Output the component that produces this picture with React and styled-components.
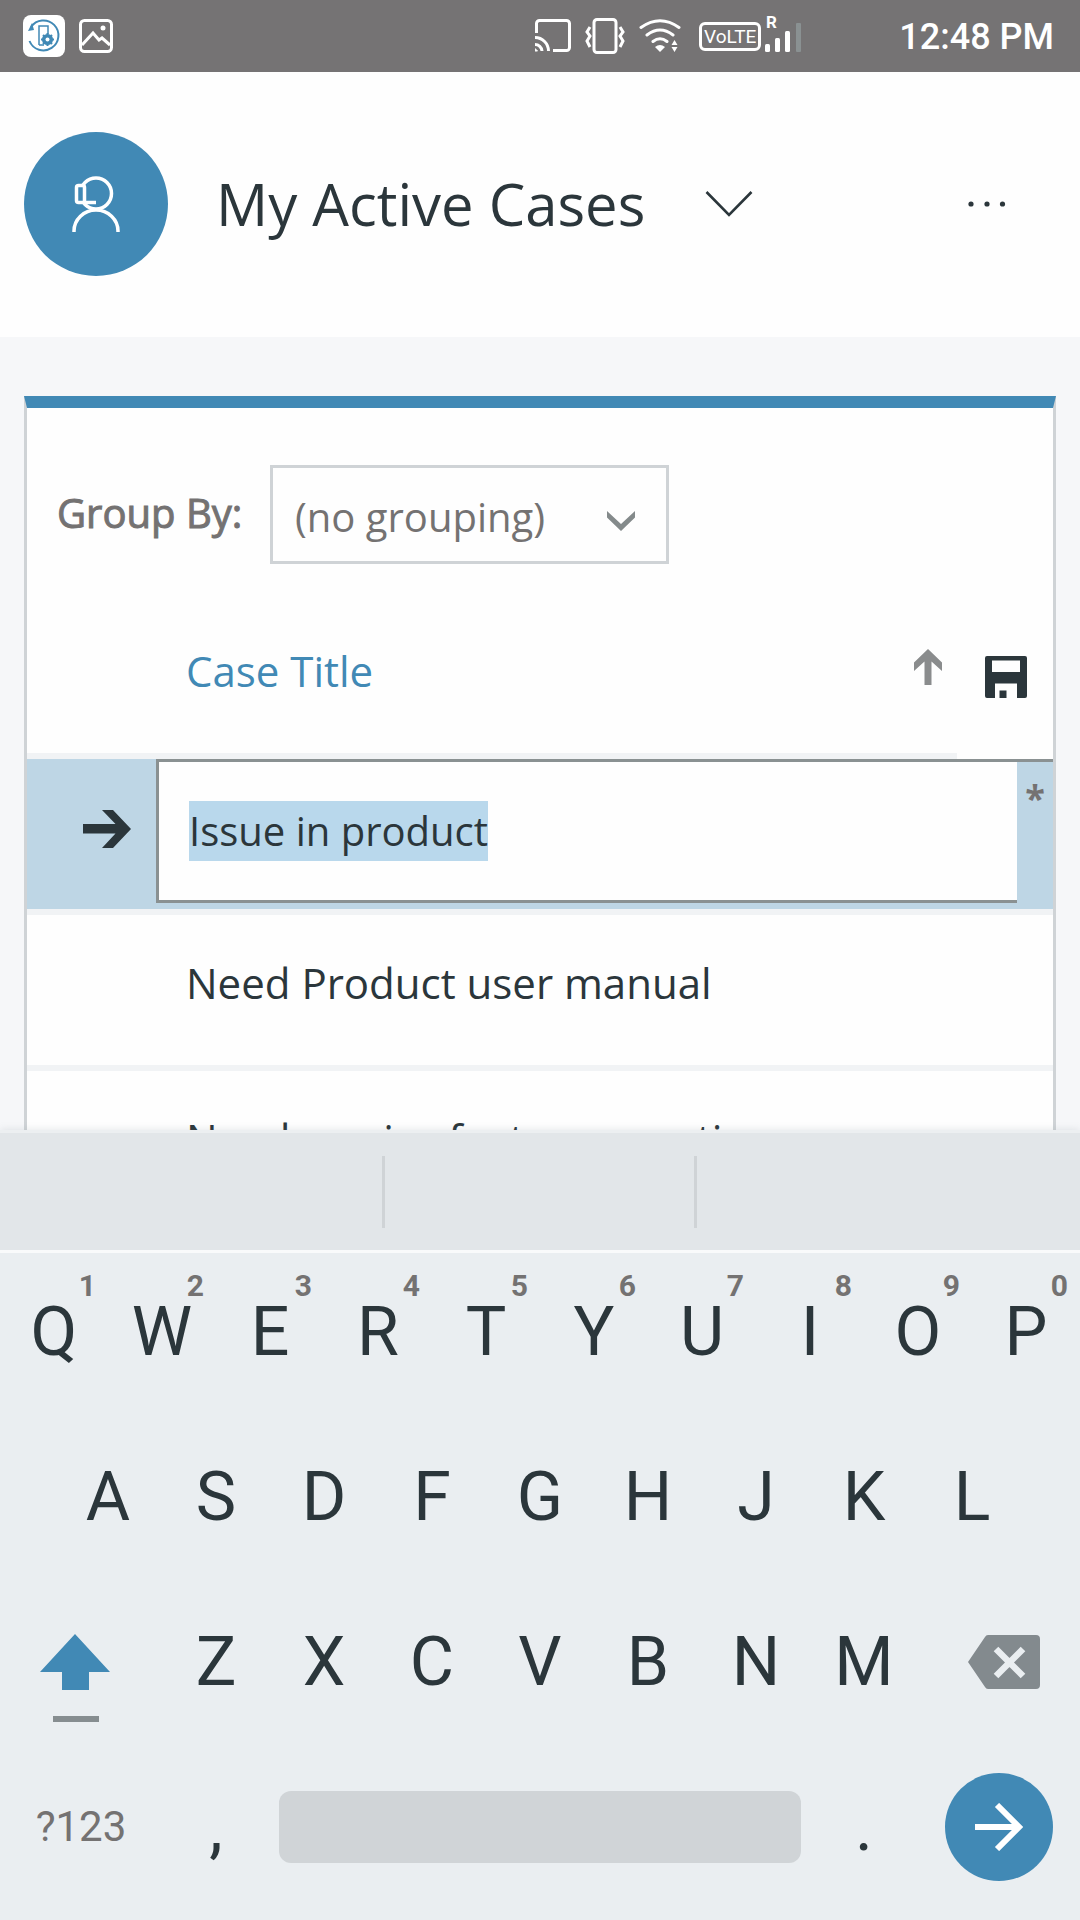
import React, { useEffect, useRef, useState } from "react";
import styled, { createGlobalStyle, css } from "styled-components";

const ink = "#2b363b";
const blue = "#4189b5";
const grey = "#747272";
const line = "#cfd3d6";

const GlobalStyle = createGlobalStyle`
  *, *::before, *::after { box-sizing: border-box; }
  body { margin: 0; background: #f6f7f9; }
  button, input, select { font: inherit; color: inherit; }
  button { background: none; border: 0; padding: 0; cursor: pointer; }
  svg { display: block; flex: none; }
`;

const Screen = styled.div`
  display: flex;
  flex-direction: column;
  height: 100vh;
  overflow: hidden;
  background: #f6f7f9;
  color: ${ink};
  font-family: "Open Sans", "Noto Sans", sans-serif;
  font-size: 42px;
  line-height: 60px;
`;

/* Status bar */

const StatusBar = styled.div`
  display: flex;
  flex: none;
  align-items: center;
  justify-content: space-between;
  height: 72px;
  padding: 0 26px 0 23px;
  background: #757374;
  color: #fff;
  font-family: Roboto, sans-serif;
`;

const StatusGroup = styled.div`
  display: flex;
  align-items: center;
  gap: 14px;
`;

const VolteBadge = styled.span`
  width: 62px;
  height: 29px;
  border: 3px solid #fff;
  border-radius: 6px;
  font-size: 19px;
  line-height: 24px;
  text-align: center;
`;

const NetworkGroup = styled.span`
  display: flex;
  align-items: center;
  gap: 4px;
  margin-left: 4px;
`;

const Clock = styled.time`
  margin-left: 84px;
  padding-top: 2px;
  font-size: 36px;
  font-weight: 500;
`;

/* View header */

const Header = styled.header`
  display: flex;
  flex: none;
  align-items: center;
  height: 265px;
  padding: 0 74px 2px 24px;
  background: #fefefe;
`;

const Avatar = styled.span`
  display: grid;
  place-items: center;
  width: 144px;
  height: 144px;
  border-radius: 50%;
  background: ${blue};
`;

const ViewTitle = styled.h1`
  margin: 0 60px 0 48px;
  font-size: 58px;
  font-weight: 400;
  line-height: 80px;
`;

const MoreButton = styled.button`
  margin-left: auto;
`;

/* Grid card */

const Content = styled.main`
  flex: 1;
  min-height: 0;
  overflow: hidden;
  padding: 59px 24px 0;
`;

const Card = styled.section`
  border: 3px solid ${line};
  border-top: 12px solid ${blue};
  background: #fefefe;
`;

const Toolbar = styled.div`
  display: flex;
  align-items: center;
  padding: 57px 30px 39px;
  color: ${grey};
  font-size: 40px;
`;

const GroupLabel = styled.label`
  width: 213px;
  padding-bottom: 4px;
  white-space: nowrap;
  -webkit-text-stroke: 1px ${grey};
`;

const SelectBox = styled.div`
  position: relative;
  width: 399px;

  svg {
    position: absolute;
    top: 46px;
    right: 34px;
    pointer-events: none;
  }
`;

const Select = styled.select`
  display: block;
  width: 100%;
  height: 99px;
  padding: 4px 80px 0 22px;
  border: 3px solid ${line};
  border-radius: 0;
  background: #fefefe;
  appearance: none;
`;

const CaseTable = styled.table`
  width: 100%;
  table-layout: fixed;
  border-collapse: separate;
  border-spacing: 0;
`;

const GutterCol = styled.col`
  width: 129px;
`;

const ActionCol = styled.col`
  width: 96px;
`;

const cell = css`
  height: 156px;
  padding: 38px 0 0;
  border-bottom: 6px solid #f1f3f5;
  font-weight: 400;
  text-align: left;
  vertical-align: top;
`;

const Cell = styled.td`
  ${cell}
  padding-left: ${(p) => (p.$text ? 30 : 0)}px;
`;

const HeadCell = styled.th`
  ${cell}
  padding-left: ${(p) => (p.$text ? 30 : 0)}px;
  border-bottom-color: ${(p) => (p.$plain ? "#fefefe" : "#f1f3f5")};
  color: ${blue};
`;

const SortButton = styled.button`
  display: flex;
  align-items: center;
  justify-content: space-between;
  width: 100%;
  padding-right: 15px;
`;

const SaveButton = styled.button`
  display: block;
  padding: 15px 0 0 28px;
`;

const MarkerCell = styled.td`
  ${cell}
  padding: 51px 0 0 56px;
  background: #bed6e5;
  background-clip: padding-box;
`;

const EditorCell = styled.td`
  ${cell}
  padding: 0 0 6px;
  background: #bed6e5;
  background-clip: padding-box;
`;

const Editor = styled.div`
  display: flex;
  height: 144px;
  border-top: 3px solid #8a9192;
  border-left: 3px solid #8a9192;
`;

const TitleInput = styled.input`
  flex: 1;
  min-width: 0;
  padding: 0 0 0 30px;
  border: 0;
  border-bottom: 3px solid #8a9192;
  border-radius: 0;
  outline: 0;
  background: #fefefe;
  font-size: 40px;

  &::selection {
    background: #b9d8ec;
    color: ${ink};
  }
`;

const Required = styled.span`
  width: 36px;
  padding-top: 6px;
  color: ${grey};
  font-weight: 700;
  font-size: 36px;
  text-align: center;
`;

/* Keyboard */

const Keyboard = styled.section`
  position: relative;
  flex: none;
  padding-bottom: 7px;
  background: #eaeef1;
  box-shadow: 0 0 8px rgba(120, 130, 138, 0.2);
  font-family: Roboto, sans-serif;
`;

const Suggestions = styled.div`
  display: grid;
  grid-template-columns: 382fr 312fr 386fr;
  height: 123px;
  padding: 23px 0 22px;
  border-top: 3px solid #eceff1;
  border-bottom: 3px solid #f9fafb;
  background: #e2e6e9;
`;

const Suggestion = styled.button`
  & + & {
    border-left: 3px solid ${line};
  }
`;

const KeyRow = styled.div`
  display: grid;
  grid-template-columns: repeat(20, 1fr);
  height: 165px;
`;

const Key = styled.button`
  position: relative;
  display: flex;
  align-items: center;
  justify-content: center;
  grid-column: ${(p) => (p.$start ? `${p.$start} / ` : "")} span ${(p) => p.$span || 2};
  padding: 0 ${(p) => p.$right || 0}px 8px ${(p) => p.$left || 0}px;
  color: ${(p) => (p.$small ? grey : ink)};
  font-size: ${(p) => (p.$small ? 42 : 68)}px;
`;

const Hint = styled.span`
  position: absolute;
  top: 17px;
  right: 12px;
  color: ${grey};
  font-size: 30px;
  font-weight: 700;
  line-height: 32px;
`;

const SpaceBar = styled.span`
  width: 100%;
  height: 72px;
  margin: 0 9px;
  border-radius: 12px;
  background: #d0d4d7;
`;

const EnterDisc = styled.span`
  display: grid;
  place-items: center;
  width: 108px;
  height: 108px;
  border-radius: 50%;
  background: ${blue};
`;

/* Drawings */

const AppLogo = () => (
  <svg width="42" height="42" viewBox="0 0 42 42">
    <rect width="42" height="42" rx="8" fill="#fff" />
    <g fill="none" stroke={blue} strokeWidth="2">
      <path d="M8 12A15 15 0 1 1 6.500 26" />
      <path d="M16 30V11h9v8M16 30h5" strokeWidth="1.500" />
      <circle cx="24.500" cy="24.500" r="3.800" strokeWidth="3.500" />
      <path d="M24.500 18v13M18 24.500h13M20 20l9 9M29 20l-9 9" strokeWidth="2" />
    </g>
    <path d="M9 8l2 7-6 1z" fill={blue} />
    <circle cx="24.500" cy="24.500" r="2" fill="#fff" />
  </svg>
);

const PictureIcon = () => (
  <svg width="34" height="34" viewBox="0 0 34 34" fill="none" stroke="#fff" strokeWidth="3">
    <rect x="1.500" y="1.500" width="31" height="31" rx="4" />
    <path d="M3 26L14 14l6 7 3-2 8 7" />
    <circle cx="24" cy="9" r="2.500" fill="#fff" stroke="none" />
  </svg>
);

const CastIcon = () => (
  <svg width="36" height="34" viewBox="0 0 36 34" fill="none" stroke="#fff" strokeWidth="3">
    <path d="M1.500 14V4.500a3 3 0 0 1 3-3h27a3 3 0 0 1 3 3v24a3 3 0 0 1-3 3H18" />
    <path d="M0 18.500A13.500 13.500 0 0 1 13.500 32M0 25.500A7 7 0 0 1 7 32" />
    <path d="M0 29.500L2.500 32H0z" fill="#fff" strokeWidth="1" />
  </svg>
);

const VibrateIcon = () => (
  <svg width="40" height="36" viewBox="0 0 40 36" fill="none" stroke="#fff" strokeWidth="3">
    <rect x="9" y="1.500" width="22" height="33" rx="3" />
    <path d="M5 9L2 14l3 4-3 5 3 6M35 9l3 5-3 4 3 5-3 6" />
  </svg>
);

const WifiIcon = () => (
  <svg width="42" height="34" viewBox="0 0 42 34" fill="none" stroke="#fff" strokeWidth="3" strokeLinecap="round">
    <path d="M2 8.500Q21-5 40 8.500M8 16Q21 6 34 16M14 22.500Q21 17 28 22.500" />
    <path d="M21 33l-5-5q5-4 10 0z" fill="#fff" stroke="none" />
    <path d="M32.500 26l3-5 3 5zM32.500 28l3 5 3-5z" fill="#fff" stroke="none" />
  </svg>
);

const SignalIcon = () => (
  <svg width="36" height="50" viewBox="0 -4 36 50" fill="#fff">
    <text x="1" y="13" fontFamily="Roboto, sans-serif" fontSize="17" fontWeight="700">R</text>
    <rect x="0" y="29" width="5" height="8" rx="1.500" />
    <rect x="10" y="23" width="5" height="14" rx="1.500" />
    <rect x="20" y="16" width="5" height="21" rx="1.500" />
    <rect x="31" y="8" width="5" height="29" rx="1" fill="#8a9192" />
  </svg>
);

const AgentIcon = () => (
  <svg width="50" height="56" viewBox="0 0 50 56" fill="none" stroke="#fff" strokeWidth="3.500">
    <circle cx="25" cy="17.500" r="15.500" />
    <path d="M3 56V55a22 21 0 0 1 44 0v1" />
    <rect x="5.500" y="9.500" width="8" height="17" rx="2" fill={blue} />
    <path d="M13 26.500h12" />
  </svg>
);

const ViewChevron = () => (
  <svg width="48" height="28" viewBox="0 0 48 28" fill="none" stroke={ink} strokeWidth="2.600">
    <path d="M1.500 2L24 25 46.500 2" />
  </svg>
);

const MoreIcon = () => (
  <svg width="38" height="8" viewBox="0 0 38 8" fill={ink}>
    <circle cx="3" cy="4" r="2.600" />
    <circle cx="19" cy="4" r="2.600" />
    <circle cx="34.500" cy="4" r="2.600" />
  </svg>
);

const SelectChevron = () => (
  <svg width="28" height="20" viewBox="0 0 28 20">
    <path d="M0 0l14 13L28 0v6.500L14 20 0 6.500z" fill="#848a8b" />
  </svg>
);

const SortArrow = () => (
  <svg width="28" height="44" viewBox="0 0 28 44">
    <path d="M14 0l14 13.500V22l-10.500-9.500V36h-7V12.500L0 22v-8.500z" fill="#8a8c8d" />
  </svg>
);

const SaveIcon = () => (
  <svg width="42" height="42" viewBox="0 0 42 42">
    <path
      fillRule="evenodd"
      fill={ink}
      d="M2 0h38a2 2 0 0 1 2 2v38a2 2 0 0 1-2 2h-8V27.500H10V42H2a2 2 0 0 1-2-2V2a2 2 0 0 1 2-2zM7 4.500V16h28V4.500zM14.500 34.500h7V42h-7z"
    />
  </svg>
);

const RowArrow = () => (
  <svg width="48" height="38" viewBox="0 0 48 38">
    <path d="M0 14h32.500L19 0h11l18 19-18 19H19l13.500-14.500H0z" fill={ink} />
  </svg>
);

const ShiftIcon = () => (
  <svg width="70" height="124" viewBox="0 -34 70 124">
    <path d="M35 0l35 38H49v18H22V38H0z" fill={blue} />
    <rect x="13" y="82" width="46" height="6" fill="#868d90" />
  </svg>
);

const BackspaceIcon = () => (
  <svg width="72" height="54" viewBox="0 0 72 54">
    <path d="M20 0h48a4 4 0 0 1 4 4v46a4 4 0 0 1-4 4H20q-2 0-3-2L0 27 17 2q1-2 3-2z" fill="#838a8e" />
    <path d="M28 14l27 27M55 14L28 41" stroke="#eaeef1" strokeWidth="6.500" />
  </svg>
);

const EnterArrow = () => (
  <svg width="48" height="48" viewBox="0 0 48 48" fill="none" stroke="#fff" strokeWidth="6">
    <path d="M0 24h42M22 2l22 22-22 22" />
  </svg>
);

const topRow = [..."QWERTYUIOP"];
const homeRow = [..."ASDFGHJKL"];
const bottomRow = [..."ZXCVBNM"];

export default function App() {
  const inputRef = useRef(null);
  const [title, setTitle] = useState("Issue in product");

  useEffect(() => {
    inputRef.current.focus();
    inputRef.current.select();
  }, []);

  return (
    <Screen>
      <GlobalStyle />
      <StatusBar>
        <StatusGroup>
          <AppLogo />
          <PictureIcon />
        </StatusGroup>
        <StatusGroup>
          <CastIcon />
          <VibrateIcon />
          <WifiIcon />
          <NetworkGroup>
            <VolteBadge>VoLTE</VolteBadge>
            <SignalIcon />
          </NetworkGroup>
          <Clock>12:48 PM</Clock>
        </StatusGroup>
      </StatusBar>

      <Header>
        <Avatar>
          <AgentIcon />
        </Avatar>
        <ViewTitle>My Active Cases</ViewTitle>
        <button type="button" aria-label="Change view">
          <ViewChevron />
        </button>
        <MoreButton type="button" aria-label="More commands">
          <MoreIcon />
        </MoreButton>
      </Header>

      <Content>
        <Card>
          <Toolbar>
            <GroupLabel htmlFor="group-by">Group By:</GroupLabel>
            <SelectBox>
              <Select id="group-by" defaultValue="none">
                <option value="none">(no grouping)</option>
              </Select>
              <SelectChevron />
            </SelectBox>
          </Toolbar>
          <CaseTable>
            <colgroup>
              <GutterCol />
              <col />
              <ActionCol />
            </colgroup>
            <thead>
              <tr>
                <HeadCell />
                <HeadCell $text>
                  <SortButton type="button">
                    Case Title
                    <SortArrow />
                  </SortButton>
                </HeadCell>
                <HeadCell $plain>
                  <SaveButton type="button" aria-label="Save">
                    <SaveIcon />
                  </SaveButton>
                </HeadCell>
              </tr>
            </thead>
            <tbody>
              <tr>
                <MarkerCell>
                  <RowArrow />
                </MarkerCell>
                <EditorCell colSpan={2}>
                  <Editor>
                    <TitleInput
                      ref={inputRef}
                      aria-label="Case Title"
                      value={title}
                      onChange={(e) => setTitle(e.target.value)}
                    />
                    <Required>*</Required>
                  </Editor>
                </EditorCell>
              </tr>
              <tr>
                <Cell />
                <Cell $text colSpan={2}>Need Product user manual</Cell>
              </tr>
              <tr>
                <Cell />
                <Cell $text colSpan={2}>Need service feature question</Cell>
              </tr>
            </tbody>
          </CaseTable>
        </Card>
      </Content>

      <Keyboard aria-label="Keyboard">
        <Suggestions>
          <Suggestion type="button" aria-label="Suggestion 1" />
          <Suggestion type="button" aria-label="Suggestion 2" />
          <Suggestion type="button" aria-label="Suggestion 3" />
        </Suggestions>
        <KeyRow>
          {topRow.map((letter, i) => (
            <Key type="button" key={letter}>
              {letter}
              <Hint>{(i + 1) % 10}</Hint>
            </Key>
          ))}
        </KeyRow>
        <KeyRow>
          {homeRow.map((letter, i) => (
            <Key type="button" key={letter} $start={2 + i * 2}>
              {letter}
            </Key>
          ))}
        </KeyRow>
        <KeyRow>
          <Key type="button" aria-label="Shift" $span={3} $right={12}>
            <ShiftIcon />
          </Key>
          {bottomRow.map((letter) => (
            <Key type="button" key={letter}>
              {letter}
            </Key>
          ))}
          <Key type="button" aria-label="Backspace" $span={3} $left={10}>
            <BackspaceIcon />
          </Key>
        </KeyRow>
        <KeyRow>
          <Key type="button" $span={3} $small>?123</Key>
          <Key type="button">,</Key>
          <Key type="button" aria-label="Space" $span={10}>
            <SpaceBar />
          </Key>
          <Key type="button">.</Key>
          <Key type="button" aria-label="Enter" $span={3}>
            <EnterDisc>
              <EnterArrow />
            </EnterDisc>
          </Key>
        </KeyRow>
      </Keyboard>
    </Screen>
  );
}
